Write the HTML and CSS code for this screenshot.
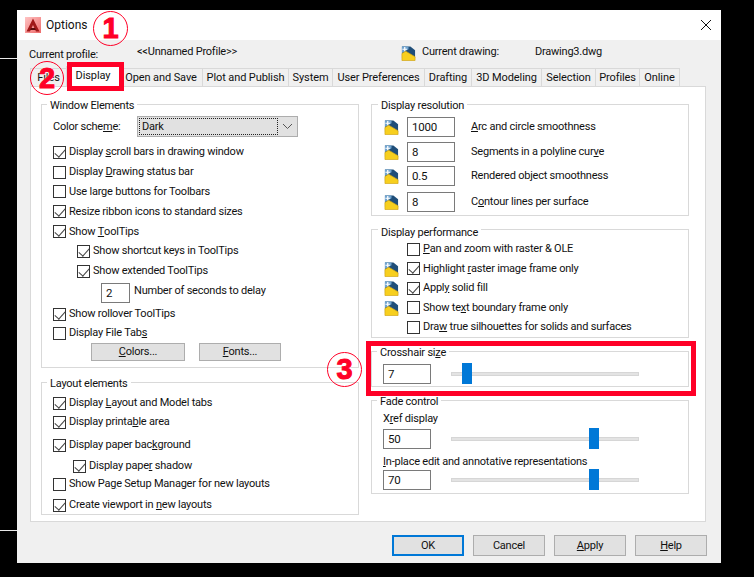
FILE: index.html

```html
<!DOCTYPE html>
<html lang="en">
<head>
    <meta charset="UTF-8">
    <title>Options</title>
    <link rel="stylesheet" href="styles.css">
</head>
<body>
    <svg class="defs" width="0" height="0">
        <defs>
            <linearGradient id="logoBg" x1="0" y1="0" x2="1" y2="1">
                <stop offset="0" stop-color="#ffc4c4"/>
                <stop offset="1" stop-color="#ee6a6a"/>
            </linearGradient>
            <symbol id="drawingIcon" viewBox="0 0 16 16">
                <path d="M1 1h9l5 4v8H1z" fill="#1f4e79"/>
                <path d="M1 1h7v3L1 8z" fill="#6fa3d0"/>
                <path d="M4 1.5v5M1.500 4h5" stroke="#fff" stroke-width="1.3"/>
                <path d="M1 8.500L5 6l10 6v4H1z" fill="#f7cf1e" stroke="#cfa312" stroke-width=".7"/>
            </symbol>
        </defs>
    </svg>

    <div class="rule rule-top"></div>
    <div class="rule rule-bottom"></div>

    <div class="dialog">
        <div class="titlebar">
            <svg class="app-logo" width="16" height="16" viewBox="0 0 16 16">
                <rect width="16" height="16" fill="url(#logoBg)"/>
                <path d="M8 1.500L14.500 14.500H11L8 8 5 14.500H1.500z" fill="#a01818"/>
                <path d="M6 11h4l1 2H5z" fill="#5e0c0c"/>
            </svg>
            <span class="title">Options</span>
            <svg class="close" width="10" height="10" viewBox="0 0 10 10">
                <path d="M0 0L10 10M10 0L0 10" stroke="#111" stroke-width="1"/>
            </svg>
        </div>

        <div class="body">
            <div class="profile">
                <span class="profile-label">Current profile:</span>
                <span>&lt;&lt;Unnamed Profile&gt;&gt;</span>
                <svg class="icon"><use href="#drawingIcon"/></svg>
                <span>Current drawing:</span>
                <span>Drawing3.dwg</span>
            </div>

            <div class="tabs">
                <div class="tab">Files</div>
                <div class="tab active">Display</div>
                <div class="tab">Open and Save</div>
                <div class="tab">Plot and Publish</div>
                <div class="tab">System</div>
                <div class="tab">User Preferences</div>
                <div class="tab">Drafting</div>
                <div class="tab">3D Modeling</div>
                <div class="tab">Selection</div>
                <div class="tab">Profiles</div>
                <div class="tab">Online</div>
            </div>

            <div class="panel">
                <div class="column">
                    <div class="group group-window">
                        <div class="group-title">Window Elements</div>
                        <div class="scheme">
                            <span class="scheme-label">Color sche<u>m</u>e:</span>
                            <div class="combo">
                                <div class="combo-value">Dark</div>
                                <svg class="combo-arrow" width="9" height="5" viewBox="0 0 9 5">
                                    <path d="M0 0L4.500 4.500 9 0" fill="none" stroke="#555"/>
                                </svg>
                            </div>
                        </div>
                        <div class="row"><span class="box on"></span>Display <u>s</u>croll bars in drawing window</div>
                        <div class="row"><span class="box"></span>Display <u>D</u>rawing status bar</div>
                        <div class="row h19"><span class="box"></span>Use large buttons for Toolbars</div>
                        <div class="row h21"><span class="box on"></span>Resize ribbon icons to standard sizes</div>
                        <div class="row h19"><span class="box on"></span>Show <u>T</u>oolTips</div>
                        <div class="row sub"><span class="box on"></span>Show shortcut keys in ToolTips</div>
                        <div class="row sub"><span class="box on"></span>Show extended ToolTips</div>
                        <div class="delay">
                            <div class="field field-small">2</div>
                            <span class="delay-label">Number of seconds to delay</span>
                        </div>
                        <div class="row"><span class="box on"></span>Show rollover ToolTips</div>
                        <div class="row h18"><span class="box"></span>Display File Tab<u>s</u></div>
                        <div class="group-buttons">
                            <div class="btn btn-colors"><span><u>C</u>olors...</span></div>
                            <div class="btn btn-fonts"><span><u>F</u>onts...</span></div>
                        </div>
                    </div>

                    <div class="group group-layout">
                        <div class="group-title">Layout elements</div>
                        <div class="row first-layout"><span class="box on"></span>Display <u>L</u>ayout and Model tabs</div>
                        <div class="row h18"><span class="box on"></span>Display printa<u>b</u>le area</div>
                        <div class="row mt4"><span class="box on"></span>Display paper bac<u>k</u>ground</div>
                        <div class="row mt1 sub-small"><span class="box on"></span>Display pape<u>r</u> shadow</div>
                        <div class="row h16"><span class="box"></span>Show Pa<u>g</u>e Setup Manager for new layouts</div>
                        <div class="row mt3"><span class="box on"></span>Create viewport in <u>n</u>ew layouts</div>
                    </div>
                </div>

                <div class="column">
                    <div class="group group-resolution">
                        <div class="group-title">Display resolution</div>
                        <div class="res first-res">
                            <svg class="icon"><use href="#drawingIcon"/></svg>
                            <div class="field">1000</div>
                            <span class="res-label"><u>A</u>rc and circle smoothness</span>
                        </div>
                        <div class="res mt5">
                            <svg class="icon"><use href="#drawingIcon"/></svg>
                            <div class="field">8</div>
                            <span class="res-label">Segments in a polyline cur<u>v</u>e</span>
                        </div>
                        <div class="res mt4">
                            <svg class="icon"><use href="#drawingIcon"/></svg>
                            <div class="field">0.5</div>
                            <span class="res-label">Rendered object smoothness</span>
                        </div>
                        <div class="res mt6">
                            <svg class="icon"><use href="#drawingIcon"/></svg>
                            <div class="field">8</div>
                            <span class="res-label">C<u>o</u>ntour lines per surface</span>
                        </div>
                    </div>

                    <div class="group group-performance">
                        <div class="group-title">Display performance</div>
                        <div class="perf h20"><span class="no-icon"></span><span class="box"></span><u>P</u>an and zoom with raster &amp; OLE</div>
                        <div class="perf h19"><svg class="icon"><use href="#drawingIcon"/></svg><span class="box on"></span>Highlight <u>r</u>aster image frame only</div>
                        <div class="perf h20"><svg class="icon"><use href="#drawingIcon"/></svg><span class="box on"></span>Appl<u>y</u> solid fill</div>
                        <div class="perf h19"><svg class="icon"><use href="#drawingIcon"/></svg><span class="box"></span>Show te<u>x</u>t boundary frame only</div>
                        <div class="perf h20"><span class="no-icon"></span><span class="box"></span>Dra<u>w</u> true silhouettes for solids and surfaces</div>
                    </div>

                    <div class="group group-crosshair">
                        <div class="group-title">Crosshair si<u>z</u>e</div>
                        <div class="slider-row crosshair-row">
                            <div class="field">7</div>
                            <div class="track"><div class="thumb" style="left: 10px"></div></div>
                        </div>
                    </div>

                    <div class="group group-fade">
                        <div class="group-title">Fade control</div>
                        <div class="fade-label xref-label">X<u>r</u>ef display</div>
                        <div class="slider-row xref-row">
                            <div class="field">50</div>
                            <div class="track"><div class="thumb" style="left: 137px"></div></div>
                        </div>
                        <div class="fade-label inplace-label"><u>I</u>n-place edit and annotative representations</div>
                        <div class="slider-row inplace-row">
                            <div class="field">70</div>
                            <div class="track"><div class="thumb" style="left: 137px"></div></div>
                        </div>
                    </div>
                </div>
            </div>

            <div class="footer">
                <div class="btn btn-main default"><span>OK</span></div>
                <div class="btn btn-main"><span>Cancel</span></div>
                <div class="btn btn-main"><span><u>A</u>pply</span></div>
                <div class="btn btn-main"><span><u>H</u>elp</span></div>
            </div>
        </div>

        <!-- annotations drawn over the screenshot -->
        <div class="mark mark-tab"></div>
        <div class="mark mark-crosshair"></div>
        <div class="badge badge-1">1</div>
        <div class="badge badge-2">2</div>
        <div class="badge badge-3">3</div>
    </div>
</body>
</html>
```

FILE: styles.css

```css
* {
    box-sizing: border-box;
}

html, body {
    height: 100%;
}

body {
    margin: 0;
    padding: 10px 33px 14px 17px;
    background: #000;
    color: #111;
    font-family: 'Roboto', sans-serif;
    font-size: 11px;
    letter-spacing: -0.22px;
    line-height: 14px;
    overflow: hidden;
    position: relative;
}

u {
    text-underline-offset: 1px;
}

.defs {
    position: absolute;
}

.rule {
    position: absolute;
    left: 0;
    width: 17px;
    height: 1px;
    background: #e8e8e8;
}

.rule-top {
    top: 58px;
}

.rule-bottom {
    top: 530px;
}

.dialog {
    position: relative;
    width: 704px;
    height: 553px;
    background: #f0f0f0;
    display: flex;
    flex-direction: column;
}

.titlebar {
    height: 30px;
    background: #fff;
    display: flex;
    align-items: center;
    padding: 0 10px 0 8px;
}

.app-logo {
    margin-right: 5px;
}

.title {
    font-size: 12px;
    letter-spacing: 0;
    flex-grow: 1;
}

.body {
    flex-grow: 1;
    padding: 0 15px 0 12px;
}

.icon {
    width: 15px;
    height: 16px;
    flex-shrink: 0;
}

.profile {
    height: 28px;
    padding-top: 5px;
    display: grid;
    grid-template-columns: 108px 264px 21px 113px auto;
    align-items: start;
}

.profile-label {
    padding-top: 3px;
}

.tabs {
    margin-left: 1px;
    height: 18px;
    display: grid;
    grid-template-columns: 36px 53px 83px 86px 44px 92px 47px 70px 54px 44px 40px;
    position: relative;
    letter-spacing: -0.1px;
}

.tab {
    height: 18px;
    background: #f0f0f0;
    border: 1px solid #d9d9d9;
    border-bottom: none;
    margin-right: -1px;
    text-align: center;
    line-height: 17px;
}

.tab.active {
    background: #fff;
    height: 21px;
    margin-top: -2px;
    line-height: 17px;
    position: relative;
    z-index: 1;
}

.panel {
    margin-left: 1px;
    height: 436px;
    background: #fff;
    border: 1px solid #d9d9d9;
    padding: 17px 16px 0 10px;
    display: grid;
    grid-template-columns: 318px 318px;
    column-gap: 12px;
}

.column {
    display: flex;
    flex-direction: column;
}

.group {
    border: 1px solid #d9d9d9;
    padding: 0 11px;
}

.group-title {
    width: fit-content;
    height: 14px;
    margin: -7px 0 0 -6px;
    padding: 1px 3px 0;
    background: #fff;
    line-height: 13px;
}

.group-window {
    height: 264px;
}

.group-layout {
    height: 133px;
    margin-top: 14px;
}

.group-resolution {
    height: 112px;
    padding-left: 12px;
}

.group-performance {
    height: 109px;
    margin-top: 13px;
    padding: 2px 11px 0 12px;
}

.group-crosshair {
    height: 36px;
    margin-top: 13px;
}

.group-fade {
    height: 94px;
    margin-top: 13px;
}

.scheme {
    height: 21px;
    margin-top: 4px;
    margin-bottom: 5px;
    display: flex;
    align-items: center;
}

.scheme-label {
    width: 84px;
    padding-top: 1px;
}

.combo {
    width: 161px;
    height: 21px;
    background: #e1e1e1;
    border: 1px solid #adadad;
    padding: 1px;
    display: flex;
    align-items: center;
}

.combo-value {
    flex-grow: 1;
    height: 17px;
    border: 1px dotted #222;
    line-height: 15px;
    padding-left: 2px;
}

.combo-arrow {
    margin: 0 4px 0 5px;
}

.row {
    height: 20px;
    display: flex;
    align-items: center;
    white-space: pre;
}

.h16 { height: 16px; }
.h18 { height: 18px; }
.h19 { height: 19px; }
.h20 { height: 20px; }
.h21 { height: 21px; }
.mt1 { margin-top: 1px; }
.mt3 { margin-top: 3px; }
.mt4 { margin-top: 4px; }
.mt5 { margin-top: 5px; }
.mt6 { margin-top: 6px; }

.sub {
    padding-left: 24px;
}

.sub-small {
    padding-left: 20px;
}

.box {
    width: 13px;
    height: 13px;
    margin-right: 3px;
    border: 1px solid #333;
    background: #fff;
    flex-shrink: 0;
    position: relative;
}

.box.on::after {
    content: "";
    position: absolute;
    left: 3px;
    top: 0;
    width: 5px;
    height: 9px;
    border-right: 1px solid #444;
    border-bottom: 1px solid #444;
    transform: rotate(42deg);
}

.delay {
    margin-top: 2px;
    height: 21px;
    padding-left: 48px;
    display: flex;
    align-items: flex-start;
}

.delay-label {
    margin-left: 4px;
    margin-top: 1px;
}

.field {
    width: 48px;
    height: 20px;
    background: #fff;
    border: 1px solid #7a7a7a;
    padding-left: 4px;
    line-height: 19px;
    font-size: 11.5px;
    letter-spacing: -0.2px;
    flex-shrink: 0;
}

.field-small {
    width: 29px;
}

.group-buttons {
    margin-top: 1px;
    padding-left: 38px;
    display: flex;
    column-gap: 14px;
}

.btn {
    background: #e1e1e1;
    border: 1px solid #adadad;
    display: flex;
    align-items: center;
    justify-content: center;
}

.btn-colors {
    width: 94px;
    height: 18px;
}

.btn-fonts {
    width: 82px;
    height: 18px;
}

.first-layout {
    margin-top: 3px;
}

.first-res {
    margin-top: 5px;
}

.res {
    height: 20px;
    display: flex;
    align-items: center;
}

.res .field {
    margin-left: 8px;
}

.res-label {
    margin-left: 16px;
    margin-top: -1px;
}

.perf {
    display: flex;
    align-items: center;
    white-space: pre;
}

.perf .box {
    margin-left: 8px;
}

.no-icon {
    width: 15px;
    flex-shrink: 0;
}

.slider-row {
    height: 20px;
    display: flex;
    align-items: center;
}

.crosshair-row {
    margin-top: 5px;
}

.track {
    width: 188px;
    height: 4px;
    margin-left: 20px;
    background: #e3e3e3;
    border: 1px solid #d6d6d6;
    position: relative;
}

.thumb {
    position: absolute;
    top: -10px;
    width: 10px;
    height: 21px;
    background: #0078d7;
}

.fade-label {
    height: 14px;
}

.xref-label {
    margin-top: 4px;
}

.xref-row {
    margin-top: 3px;
}

.inplace-label {
    margin-top: 6px;
}

.inplace-row {
    margin-top: 1px;
}

.footer {
    margin-top: 13px;
    margin-right: -1px;
    display: flex;
    justify-content: flex-end;
    column-gap: 9px;
}

.btn-main {
    width: 72px;
    height: 21px;
}

.btn-main.default {
    border: 2px solid #0078d7;
}

.mark {
    position: absolute;
    border: 5px solid #ff0027;
    z-index: 2;
}

.mark-tab {
    left: 50px;
    top: 52px;
    width: 57px;
    height: 29px;
}

.mark-crosshair {
    left: 349px;
    top: 331px;
    width: 330px;
    height: 55px;
}

.badge {
    position: absolute;
    z-index: 3;
    width: 35px;
    height: 35px;
    border: 1.5px solid #ff0027;
    border-radius: 50%;
    color: #ff0027;
    font-family: 'Liberation Sans', sans-serif;
    font-size: 29px;
    font-weight: bold;
    letter-spacing: 0;
    line-height: 32px;
    text-align: center;
    -webkit-text-stroke: 1px #ff0027;
    text-shadow: 0 0 2px #fff, 0 0 2px #fff;
}

.badge-1 {
    left: 76px;
    top: 1px;
}

.badge-2 {
    left: 13px;
    top: 51px;
    width: 34px;
    height: 34px;
}

.badge-3 {
    left: 310px;
    top: 342px;
}
```
